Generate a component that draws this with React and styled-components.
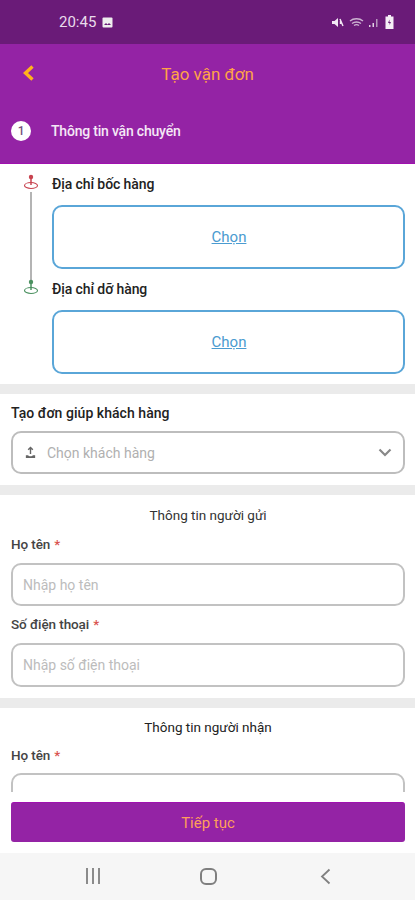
import React from "react";
import styled, { createGlobalStyle } from "styled-components";

const Global = createGlobalStyle`
  html, body { margin: 0; padding: 0; background: #fff; }
  * { box-sizing: border-box; }
  body { font-family: Roboto, "Noto Sans", sans-serif; }
`;
const Page = styled.div`
  width: 415px; height: 900px; display: flex; flex-direction: column; overflow: hidden; background: #fff;
`;
const StatusBar = styled.div`
  height: 44px; flex: none; background: #6a1b78; color: #e9dcec; display: flex; align-items: center;
  justify-content: space-between; padding: 0 21px 0 59px; font-size: 15px;
`;
const StatusLeft = styled.div`display: flex; align-items: center; gap: 6px;`;
const StatusRight = styled.div`display: flex; align-items: center; gap: 5px;`;
const Header = styled.div`
  height: 120px; flex: none; background: #9423a5; border-bottom: 1px solid #a010b0; display: flex; flex-direction: column;
`;
const TopRow = styled.div`
  height: 59px; position: relative; display: flex; align-items: center; justify-content: center;
  color: #ffa347; font-size: 17px; padding-top: 1px;
`;
const Back = styled.svg`position: absolute; left: 22px; top: 21px;`;
const StepRow = styled.div`
  display: flex; align-items: center; gap: 20px; padding: 18px 0 0 11px; color: #f4e8f6; font-size: 14px; font-weight: 500;
  letter-spacing: -0.2px;
`;
const StepNum = styled.div`
  width: 20px; height: 20px; border-radius: 50%; background: #fff; color: #75507c; font-size: 12px;
  display: flex; align-items: center; justify-content: center;
`;
const Scroll = styled.div`flex: 1; min-height: 0; overflow: hidden; background: #ebebeb; display: flex; flex-direction: column; gap: 10px;`;
const Section = styled.div`background: #fff; padding: ${p => p.$pad}; flex: none;`;
const AddressRow = styled.div`display: grid; grid-template-columns: 41px 1fr; position: relative;`;
const RouteLine = styled.div`
  position: absolute; left: 19px; top: 18px; width: 2px; height: 89px; background: #b4b4b4;
`;
const Marker = styled.svg`margin: 0 0 0 12px; position: relative;`;
const Label = styled.div`
  color: #222; font-size: 14px; line-height: 20px; font-weight: 500; letter-spacing: ${p => p.$ls || "-0.1px"};
  display: flex; align-items: center;
`;
const PickBox = styled.div`
  height: 64px; border: 2px solid #5aa6d8; border-radius: 10px; display: flex; align-items: center; justify-content: center;
  margin: ${p => p.$m}; color: #4a9bd0; font-size: 15px; text-decoration: underline; padding-left: 1px;
`;
const LabelRow = styled.div`height: 20px; display: flex; align-items: center;`;
const Select = styled.div`
  height: 43px; margin-top: 8px; border: 2px solid #bdbdbd; border-radius: 10px; display: flex; align-items: center;
  padding: 0 11px 0 11px; gap: 10px; color: #b0b0b0; font-size: 14px;
`;
const Grow = styled.span`flex: 1;`;
const Title = styled.div`
  text-align: center; font-size: 13.5px; color: ${p => p.$c || "#333"}; line-height: 20px; padding-top: ${p => p.$pt || 10}px;
`;
const Req = styled.span`color: #d9534f; margin-left: 4px;`;
const FieldLabel = styled(Label)`color: #444; margin-top: ${p => p.$mt}; font-size: 13.5px;`;
const Input = styled.div`
  height: ${p => p.$h || 43}px; margin-top: ${p => p.$mt || 9}px; border: 2px solid #c2c2c2; border-radius: 10px; display: flex; align-items: center;
  padding: 0 10px; color: #bcbcbc; font-size: 14px;
`;
const Footer = styled.div`height: 61px; flex: none; background: #fff; padding: 10px 10px 0 11px;`;
const Continue = styled.div`
  height: 40px; background: #9423a5; border-radius: 3px; color: #ff9f5a; font-size: 15px; display: flex;
  align-items: center; justify-content: center; border-top: 1px solid #a010b0;
`;
const Nav = styled.div`
  height: 47px; flex: none; background: #f6f6f6; display: grid; grid-template-columns: 77px 32px 83px 32px 85px 32px 1fr; align-items: center; padding-bottom: 1px;
`;
const NavCell = styled.div`grid-column: ${p => p.$c}; display: flex; justify-content: center;`;

const Pin = ({ c }) => (
  <Marker width="16" height="20" viewBox="0 0 16 20" fill="none">
    <ellipse cx="8" cy="11.500" rx="6.500" ry="3" stroke={c} strokeWidth="1.100" fill="#fff" />
    <line x1="8" y1="3" x2="8" y2="11" stroke={c} strokeWidth="1.500" />
    <circle cx="8" cy="3" r="2.200" fill={c} />
  </Marker>
);

export default function App() {
  return (
    <Page>
      <Global />
      <StatusBar>
        <StatusLeft>
          20:45
          <svg width="11" height="11" viewBox="0 0 11 11"><rect x="0.5" y="0.5" width="10" height="10" rx="1" fill="#eee" /><path d="M2 8l2-2 1.500 1.500L7 6l2 2z" fill="#6a1b78" /></svg>
        </StatusLeft>
        <StatusRight>
          <svg width="13" height="13" viewBox="0 0 13 13"><path d="M1 5h2.500L7 2v9L3.500 8H1z" fill="#f2e8f4" /><path d="M9 3l3 7M9.500 5v3" stroke="#f2e8f4" strokeWidth="1.400" /></svg>
          <svg width="15" height="11" viewBox="0 0 15 11" fill="none"><path d="M1 4c3.500-3 9.500-3 13 0M3 6.500c2.500-2 6.500-2 9 0M5 8.500c1.500-1 3.500-1 5 0" stroke="#cdb4d2" strokeWidth="1.300" /></svg>
          <svg width="11" height="11" viewBox="0 0 11 11"><rect x="0" y="8" width="1.500" height="2" fill="#e0d0e4" /><rect x="3.500" y="6" width="1.500" height="4" fill="#e0d0e4" /><rect x="7" y="2" width="1.500" height="8" fill="#b595bc" /></svg>
          <svg width="9" height="14" viewBox="0 0 9 14"><path d="M3 0h3v1.500h2.500V14H.5V1.500H3z" fill="#f5eef6" /><path d="M4.500 4.500L3 8h1.500v2L6 7H4.500z" fill="#6a1b78" /></svg>
        </StatusRight>
      </StatusBar>
      <Header>
        <TopRow>
          <Back width="13" height="16" viewBox="0 0 13 16" fill="none"><path d="M10.500 1.500L3.500 8l7 6.500" stroke="#ffb21c" strokeWidth="3.400" /></Back>
          Tạo vận đơn
        </TopRow>
        <StepRow>
          <StepNum>1</StepNum>
          Thông tin vận chuyển
        </StepRow>
      </Header>
      <Scroll>
        <Section $pad="10px 10px 10px 11px">
          <AddressRow>
            <RouteLine />
            <Pin c="#c8434f" />
            <Label>Địa chỉ bốc hàng</Label>
            <span />
            <PickBox $m="11px 0 10px">Chọn</PickBox>
            <Pin c="#4b9160" />
            <Label>Địa chỉ dỡ hàng</Label>
            <span />
            <PickBox $m="11px 0 0">Chọn</PickBox>
          </AddressRow>
        </Section>
        <Section $pad="9px 10px 11px 11px">
          <LabelRow><Label $ls="0.05px">Tạo đơn giúp khách hàng</Label></LabelRow>
          <Select>
            <svg width="13" height="14" viewBox="0 0 14 14" fill="none"><path d="M7 1v7M4.500 3.500L7 1l2.500 2.500" stroke="#666" strokeWidth="1.500" /><path d="M2 9.500h2.500c.5 1.500 4.500 1.500 5 0H12v3H2z" fill="#666" /></svg>
            <Grow>Chọn khách hàng</Grow>
            <svg width="14" height="9" viewBox="0 0 14 9" fill="none"><path d="M1.500 1.500L7 7l5.500-5.500" stroke="#888" strokeWidth="2.200" /></svg>
          </Select>
        </Section>
        <Section $pad="0 10px 11px 11px">
          <Title>Thông tin người gửi</Title>
          <FieldLabel $mt="9px">Họ tên<Req>*</Req></FieldLabel>
          <Input $mt={9}>Nhập họ tên</Input>
          <FieldLabel $mt="8px">Số điện thoại<Req>*</Req></FieldLabel>
          <Input $h={44}>Nhập số điện thoại</Input>
        </Section>
        <Section $pad="0 10px 0 11px">
          <Title $pt={9} $c="#222">Thông tin người nhận</Title>
          <FieldLabel $mt="8px">Họ tên<Req>*</Req></FieldLabel>
          <Input $mt={8} $h={40} />
        </Section>
      </Scroll>
      <Footer><Continue>Tiếp tục</Continue></Footer>
      <Nav>
        <NavCell $c={2}>
          <svg width="16" height="16" viewBox="0 0 16 16" fill="#8b8b8b"><rect x="1" y="0" width="2" height="16" /><rect x="7" y="0" width="2" height="16" /><rect x="13" y="0" width="2" height="16" /></svg>
        </NavCell>
        <NavCell $c={4}>
          <svg width="17" height="17" viewBox="0 0 17 17" fill="none"><rect x="1" y="1" width="15" height="15" rx="5" stroke="#7f7f7f" strokeWidth="2" /></svg>
        </NavCell>
        <NavCell $c={6}>
          <svg width="11" height="17" viewBox="0 0 11 17" fill="none"><path d="M9.500 1.500L2 8.500l7.500 7" stroke="#808080" strokeWidth="1.800" /></svg>
        </NavCell>
      </Nav>
    </Page>
  );
}
